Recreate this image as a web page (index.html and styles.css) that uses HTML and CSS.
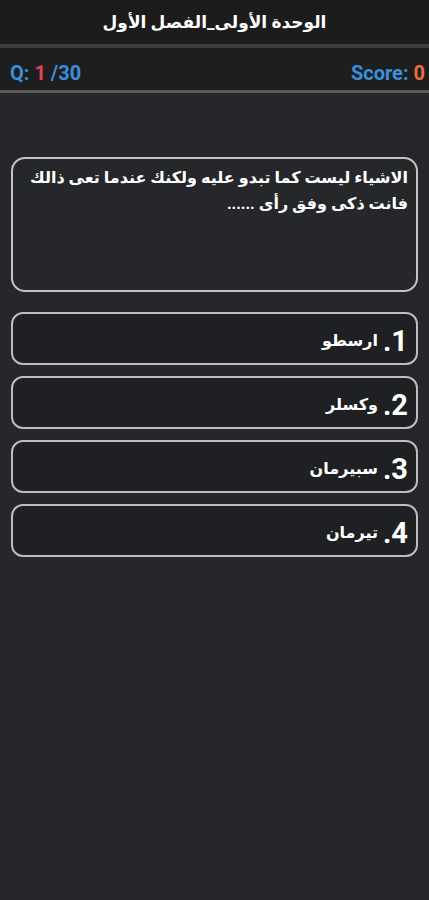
FILE: index.html
```html
<!DOCTYPE html>
<html lang="ar">
<head>
    <meta charset="utf-8">
    <meta name="viewport" content="width=device-width, initial-scale=1">
    <link rel="stylesheet" href="styles.css">
</head>
<body>

    <header class="topbar">
        <h1>الوحدة الأولى_الفصل الأول</h1>
    </header>

    <div class="status">
        <p class="count">Q: <span class="current">1</span> /30</p>
        <p class="score">Score: <span class="points">0</span></p>
    </div>

    <main>
        <section class="question">
            <p>الاشياء ليست كما تبدو عليه ولكنك عندما تعى ذالك فانت ذكى وفق رأى ......</p>
        </section>

        <section class="answers">
            <button class="answer"><span class="num">1.</span> ارسطو</button>
            <button class="answer"><span class="num">2.</span> وكسلر</button>
            <button class="answer"><span class="num">3.</span> سبيرمان</button>
            <button class="answer"><span class="num">4.</span> تيرمان</button>
        </section>
    </main>

</body>
</html>
```

FILE: styles.css
```css
body {
    margin: 0;
    background-color: #25272a;
    color: white;
    font-family: Roboto, "DejaVu Sans", sans-serif;
    min-height: 900px;
}

.topbar {
    background-color: #1c1c1c;
    height: 44px;
    display: flex;
    justify-content: center;
    align-items: center;
    border-bottom: 4px solid #3c3c3c;
}

.topbar h1 {
    margin: 0;
    font-size: 17px;
    font-weight: bold;
    direction: rtl;
}

.status {
    background-color: #1e1e1e;
    height: 34px;
    display: flex;
    justify-content: space-between;
    align-items: center;
    padding: 8px 4px 0 10px;
    border-bottom: 3px solid #5a5a5a;
}

.status p {
    margin: 0;
    font-size: 20px;
    font-weight: bold;
    color: #3b8fdb;
}

.current {
    color: #e0405e;
}

.points {
    color: #e8703a;
}

main {
    padding: 64px 11px 0;
}

.question {
    border: 2px solid #c4c4c4;
    border-radius: 14px;
    padding: 6px 8px;
    direction: rtl;
    box-sizing: border-box;
    height: 135px;
}

.question p {
    margin: 0;
    font-size: 16px;
    font-weight: bold;
    line-height: 26px;
}

.answers {
    display: flex;
    flex-direction: column;
    gap: 11px;
    margin-top: 20px;
}

.answer {
    height: 53px;
    border: 2px solid #bdbdbd;
    border-radius: 12px;
    background-color: #1f2023;
    color: white;
    direction: rtl;
    text-align: right;
    padding: 4px 8px 0;
    font-family: Roboto, "DejaVu Sans", sans-serif;
    font-size: 16px;
    font-weight: bold;
    display: flex;
    align-items: center;
    gap: 5px;
}

.num {
    font-size: 29px;
}
```
